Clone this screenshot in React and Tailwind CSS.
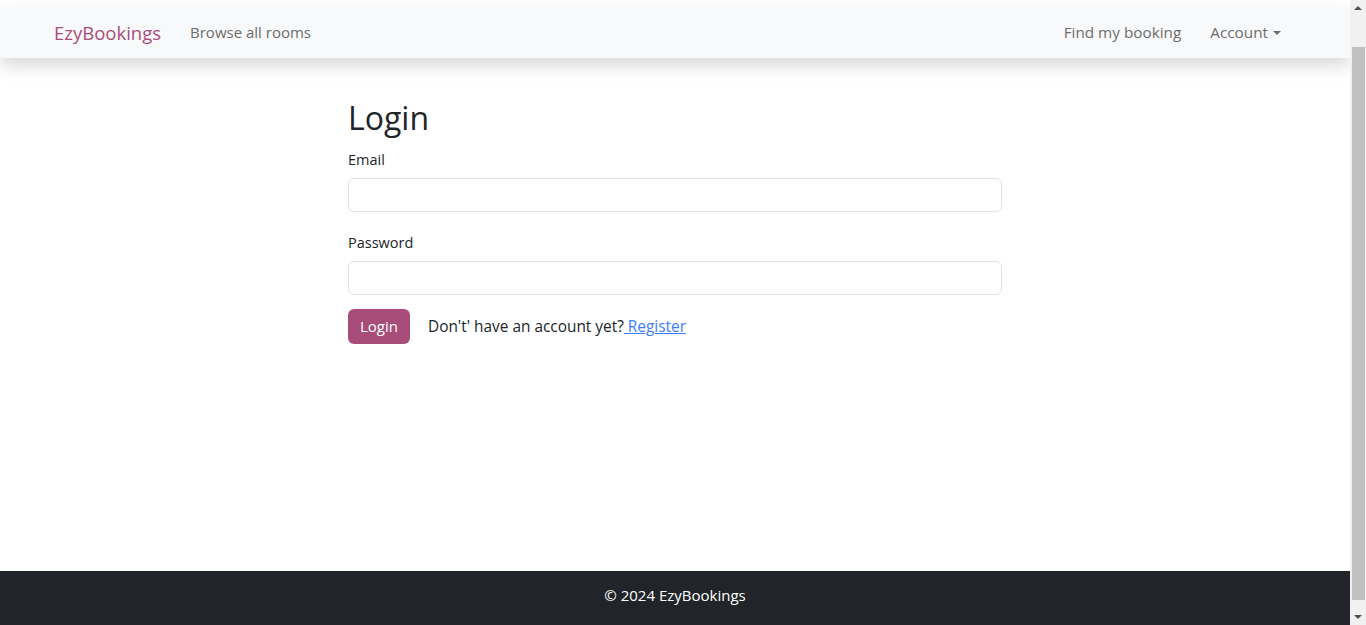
import React from 'react';

const App = () => {
  return (
    <div className="flex h-screen overflow-hidden bg-white font-['Open_Sans',sans-serif] text-[#212529]">
      <div className="flex-1 overflow-hidden pt-[7px]">
        <nav className="relative z-10 flex h-[51px] items-center bg-[#f8f9fa] pl-[54px] pr-[61px] shadow-[0_8px_16px_rgba(0,0,0,0.15)]">
          <a href="#" className="mr-[29px] text-[18.5px] text-[#a84d7a]">EzyBookings</a>
          <a href="#" className="text-[15px] text-[#6c6c6c]">Browse all rooms</a>
          <div className="ml-auto flex items-center gap-[29px] text-[15.3px] text-[#6c6c6c]">
            <a href="#">Find my booking</a>
            <a href="#" className="flex items-center pr-2">
              Account
              <span className="ml-[5px] inline-block h-0 w-0 border-x-[4px] border-t-[4px] border-x-transparent border-t-[#6c6c6c]" />
            </a>
          </div>
        </nav>

        <main className="h-[513px]">
          <div className="mx-auto w-[654px] pt-[40px]">
            <h2 className="text-[32px] leading-[40px]">Login</h2>
            <form className="mt-[12px]">
              <label className="block text-[14.5px] leading-[20px]">Email</label>
              <input type="email" className="mt-[8px] block h-[34px] w-full rounded-[6px] border border-[#dee2e6] px-3" />
              <label className="mt-[21px] block text-[14.5px] leading-[20px]">Password</label>
              <input type="password" className="mt-[8px] block h-[34px] w-full rounded-[6px] border border-[#dee2e6] px-3" />
              <div className="mt-[14px] flex items-center">
                <button type="button" className="h-[35px] w-[62px] rounded-[6px] bg-[#a84d7a] text-[15px] text-white">Login</button>
                <p className="ml-[18px] text-[15.4px]">
                  Don't' have an account yet?<a href="#" className="text-[#3d7dfd] underline"> Register</a>
                </p>
              </div>
            </form>
          </div>
        </main>

        <footer className="h-[100px] bg-[#212529] pt-[13px] text-center text-[15px] font-medium text-white">
          © 2024 EzyBookings
        </footer>
      </div>

      <div className="flex w-[16px] flex-col items-center bg-[#f1f1f1]">
        <div className="flex h-[16px] w-full items-center justify-center">
          <span className="inline-block h-0 w-0 border-x-[4px] border-b-[4px] border-x-transparent border-b-[#505050]" />
        </div>
        <div className="mt-[31px] h-[553px] w-[13px] bg-[#c1c1c1]" />
        <div className="flex-1" />
        <div className="flex h-[16px] w-full items-center justify-center">
          <span className="inline-block h-0 w-0 border-x-[4px] border-t-[4px] border-x-transparent border-t-[#505050]" />
        </div>
      </div>
    </div>
  );
};

export default App;
